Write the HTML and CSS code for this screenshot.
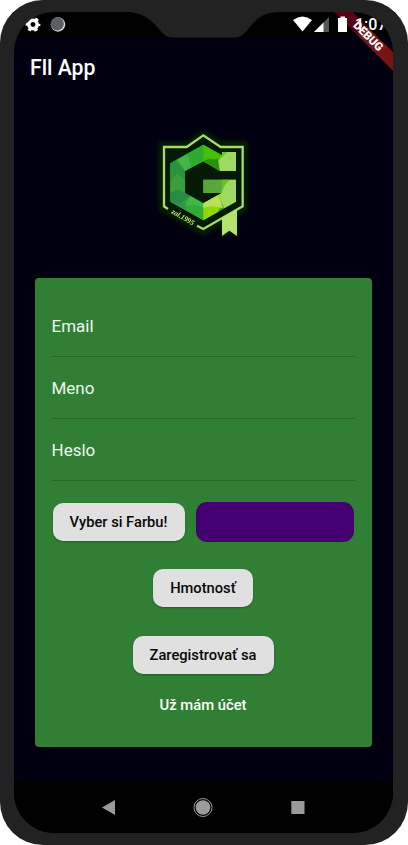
FILE: index.html
```html
<!DOCTYPE html>
<html lang="sk">
<head>
<meta charset="utf-8">
<title>Fll App</title>
<link rel="stylesheet" href="styles.css">
</head>
<body>
<div class="phone">
  <div class="screen">
    <header class="status">
      <svg class="status-left" width="60" height="25" viewBox="14 12 60 25">
        <circle cx="33" cy="24.5" r="4.2" fill="none" stroke="#fff" stroke-width="3.4"/>
        <circle cx="33" cy="24.5" r="6.2" fill="none" stroke="#fff" stroke-width="2.4" stroke-dasharray="3.2 3.29" stroke-dashoffset="1.6"/>
        <circle cx="58" cy="24.5" r="7.2" fill="#d9dddf"/>
        <circle cx="57.3" cy="23.8" r="6.6" fill="#596064"/>
      </svg>
      <svg class="status-icons" width="60" height="25" viewBox="290 12 60 25">
        <path d="M293 20q9.500-7 19 0l-9.500 11.500z" fill="#fff"/>
        <path d="M314 32L329 17V32z" fill="#50585c"/>
        <path d="M314 32L323.500 22.500V32z" fill="#fff"/>
        <path d="M338 18h2.500v-1.500h4.500V18h2v14h-9z" fill="#fff"/>
      </svg>
      <span class="clock">1:07</span>
    </header>
    <h1 class="title">Fll App</h1>
    <main class="content">
      <svg class="logo" width="106" height="120" viewBox="0 0 318 360">
        <path d="M160 17L215 50H291V255L160 331L28 255V53H105Z" fill="#041a05"/>
        <path d="M54 252L42 244V66H110L160 31L212 66H278V244L160 312L141 302" fill="none" stroke="#a7dc64" stroke-width="7"/>
        <path d="M216 278L261 253V333L238 317L216 333Z" fill="#b2e36b"/>
        <path d="M160 59L61 115V230L160 286L258 230V164H160V204H215V222L160 235L105 204V138L160 109L210 138H258V81H216V91Z" fill="#35a936"/>
        <path d="M61 115L80 104L113 134L105 138V165L80 155L61 170Z" fill="#27933b"/>
        <path d="M80 104L112 86L125 127L105 138Z" fill="#44b448"/>
        <path d="M160 59V109L125 127L112 86Z" fill="#2dab2f"/>
        <path d="M160 59L216 91V81H225L210 138L160 109Z" fill="#47bd08"/>
        <path d="M160 109L176 101Q194 105 204 101L210 138Z" fill="#269209"/>
        <path d="M216 91L230 81H258V138H210L205 108Z" fill="#a0d961"/>
        <path d="M205 107L216 91V81H233Z" fill="#5ed01d"/>
        <path d="M61 170L82 145L105 165V202L84 193L61 205Z" fill="#3b9e3a"/>
        <path d="M61 205L84 193L105 204L121 213L87 241L61 230Z" fill="#268d43"/>
        <path d="M61 230L87 235L118 236L104 254Z" fill="#2c9745"/>
        <path d="M121 213L160 235V248Q130 232 104 246Z" fill="#42b64a"/>
        <path d="M104 254Q131 235 160 248V286Z" fill="#32ac37"/>
        <path d="M160 235L215 204V238L204 261L160 286Z" fill="#91d800"/>
        <path d="M160 235L204 210L219 250Q185 238 160 248Z" fill="#b6e158"/>
        <path d="M160 164H238L215 204H160Z" fill="#5aa638"/>
        <path d="M215 164H240L215 204Z" fill="#65c41e"/>
        <path d="M215 204Q221 178 240 164H258V230L222 250L206 209Z" fill="#a0d961"/>
        <text class="logo-text" transform="translate(63 264) rotate(30)">zal.1995</text>
      </svg>
      <form class="card">
        <label class="field">Email</label>
        <label class="field">Meno</label>
        <label class="field">Heslo</label>
        <div class="color-row">
          <button type="button" class="button pick">Vyber si Farbu!</button>
          <span class="swatch"></span>
        </div>
        <button type="button" class="button weight">Hmotnosť</button>
        <button type="button" class="button register">Zaregistrovať sa</button>
        <a class="login">Už mám účet</a>
      </form>
    </main>
    <nav class="navbar">
      <svg width="379" height="52" viewBox="0 0 379 52">
        <path d="M88 26.500L101 19V34Z" fill="#9b9b9b"/>
        <circle cx="189" cy="26.500" r="9" fill="none" stroke="#9b9b9b" stroke-width="1"/>
        <circle cx="189" cy="26.500" r="7.300" fill="#9b9b9b"/>
        <rect x="277.300" y="20" width="13.200" height="13" fill="#9b9b9b"/>
      </svg>
    </nav>
    <div class="debug">DEBUG</div>
  </div>
  <svg class="notch" width="156" height="26" viewBox="0 0 156 26"><path d="M0 0C18 0 26 8 33 16C38 22 41 25.500 47 25.500H110C116 25.500 119 22 124 16C131 7 138 0 156 0Z" fill="#222"/></svg>
</div>
</body>
</html>
```
FILE: styles.css
```css
* { box-sizing: border-box; }
body { margin: 0; background: #fff; font-family: Roboto, sans-serif; }
.phone {
  position: relative;
  width: 408px;
  height: 845px;
  padding: 12px 15px 12px 14px;
  background: #222;
  border-radius: 43px;
}
.screen {
  position: relative;
  display: flex;
  flex-direction: column;
  width: 379px;
  height: 821px;
  overflow: hidden;
  background: linear-gradient(#000 25px, #000010 25px);
  border-radius: 40px;
}
.status {
  position: relative;
  z-index: 1;
  display: flex;
  flex: 0 0 25px;
  color: #fff;
}
.status-icons { margin-left: 216px; }
.clock {
  margin-left: 5px;
  font-size: 16px;
  font-weight: 500;
  line-height: 25px;
}
.title {
  flex: 0 0 60px;
  min-height: 0;
  margin: 0;
  padding-left: 16px;
  color: #fff;
  font-size: 21.2px;
  font-weight: 500;
  line-height: 62px;
}
.content {
  display: flex;
  flex: 1;
  flex-direction: column;
  align-items: center;
  padding-top: 28px;
}
.logo { flex: none; margin-left: -1px; filter: drop-shadow(0 0 2px #0a2605); }
.logo-text { fill: #c5ec76; font: italic bold 22px "Liberation Serif", serif; }
.card {
  display: flex;
  flex-direction: column;
  align-items: center;
  width: 337px;
  height: 469px;
  margin-top: 33px;
  margin-right: 1px;
  padding: 17px 17px 0;
  border-radius: 4px;
  background: #307f34;
}
.field {
  width: 303px;
  height: 62px;
  padding-top: 21px;
  border-bottom: 1px solid #266629;
  color: #f0f6f0;
  font-size: 17px;
  line-height: 20px;
}
.color-row {
  display: flex;
  align-items: center;
  gap: 11px;
  width: 303px;
  height: 40px;
  margin-top: 21px;
  padding-left: 1px;
}
.button {
  height: 38px;
  padding: 0;
  border: 0;
  border-radius: 10px;
  background: #e0e0e0;
  box-shadow: 0 1px 2px rgba(0, 0, 0, .28);
  color: #080808;
  font: 500 14.700px Roboto, sans-serif;
}
.pick { width: 132px; }
.swatch { width: 158px; height: 40px; border-radius: 11px; background: #440070; }
.weight { width: 100px; margin-top: 27px; }
.register { width: 141px; margin-top: 29px; }
.login { margin-top: 22px; color: #fff; font-size: 14.800px; font-weight: 500; line-height: 18px; }
.navbar { flex: 0 0 52px; background: #000; }
.navbar svg { display: block; }
.debug {
  position: absolute;
  z-index: 0;
  top: 19px;
  left: 298px;
  width: 114px;
  height: 13px;
  padding-right: 3px;
  transform: rotate(45deg);
  background: linear-gradient(90deg, #5c0016 38%, #791416 44%);
  box-shadow: 0 0 6px rgba(0, 0, 0, .5);
  color: #fff;
  font-size: 11.5px;
  font-weight: 900;
  line-height: 13px;
  text-align: center;
}
.notch { position: absolute; top: 12px; left: 125px; }
```
